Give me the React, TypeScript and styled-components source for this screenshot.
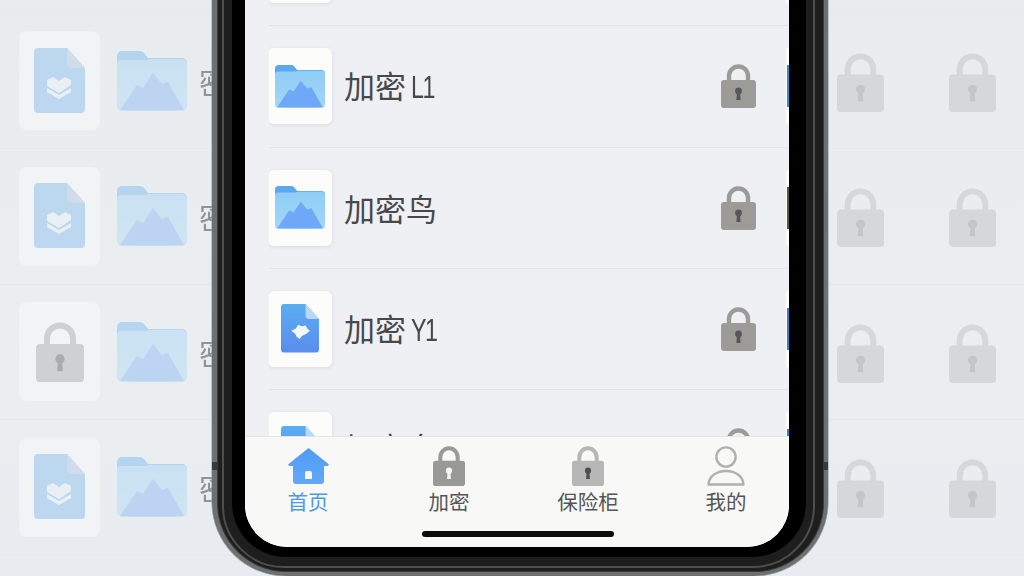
import React from "react";
import styled, { createGlobalStyle } from "styled-components";

const Global = createGlobalStyle`
  html, body { margin: 0; padding: 0; background: #e9edf0; }
  body { font-family: "Noto Sans CJK SC", "Noto Sans", sans-serif; }
`;

const Page = styled.div`
  position: relative;
  width: 1024px;
  height: 576px;
  overflow: hidden;
  background: linear-gradient(180deg, #e8ecef 0%, #ebeef1 55%, #e8ecf0 100%);
`;

/* blurred wallpaper of the same app behind the phone */
const Wall = styled.div`
  position: absolute;
  left: 0;
  right: 0;
  top: -122px;
  display: grid;
  grid-auto-rows: 135.5px;
  filter: blur(0.7px);
`;
const WallRow = styled.div`
  display: flex;
  align-items: center;
  padding: 0 28px 0 19px;
  border-bottom: 1px solid #e6e9ec;
`;
const WallTile = styled.div`
  width: 81px;
  height: 99px;
  margin-right: 17px;
  border-radius: 8px;
  background: rgba(255, 255, 255, 0.36);
  display: flex;
  align-items: center;
  justify-content: center;
  flex-shrink: 0;
`;
const WallName = styled.span`
  margin-left: 12px;
  font-size: 30px;
  line-height: 34px;
  color: #8f9397;
`;
const WallLocks = styled.div`
  margin-left: auto;
  padding-top: 3px;
  display: flex;
  gap: 65px;
`;

const Shell = styled.div`
  position: relative;
  box-sizing: border-box;
  width: 616px;
  height: 671px;
  margin: -95px 0 0 212px;
  border: solid #6e6f71;
  border-width: 0 5px 5px 6px;
  border-radius: 0 0 74px 74px;
  box-shadow: inset 0 0 0 1px #4a4a4c, 0 0 0 0.5px #9a9b9d;
`;
const Frame = styled.div`
  position: relative;
  box-sizing: border-box;
  height: 100%;
  padding: 0 17px 14px 14px;
  border-radius: 0 0 68px 68px;
  box-shadow: 0 0 0 1px #3b3b3c;
  background: #1e1e1f;
  &::before {
    content: "";
    position: absolute;
    left: 4px;
    right: 8px;
    top: -2px;
    bottom: 3px;
    border: 2px solid #4e4e50;
    border-radius: 0 0 62px 62px;
  }
`;
const Bezel = styled.div`
  position: relative;
  box-sizing: border-box;
  height: 100%;
  padding: 0 17px 10px 13px;
  border-radius: 0 0 54px 54px;
  background: #000;
`;
const Screen = styled.div`
  height: 100%;
  display: flex;
  flex-direction: column;
  overflow: hidden;
  border-radius: 0 0 42px 42px;
  background: #eef0f3;
`;
const SideMark = styled.i<{ $side: "left" | "right" }>`
  position: absolute;
  top: 557px;
  ${(p) => (p.$side === "left" ? "left: -6px; width: 6px;" : "right: -5px; width: 5px;")}
  height: 8px;
  background: #39393a;
`;

const List = styled.div`
  flex: 1;
  min-height: 0;
  overflow: hidden;
`;
const Row = styled.div`
  box-sizing: border-box;
  height: 121.3px;
  margin-left: 24px;
  display: flex;
  align-items: center;
  border-bottom: 1px solid #e2e5e8;
  overflow: hidden;
`;
const Tile = styled.div`
  width: 64px;
  height: 76px;
  border-radius: 6px;
  margin-left: -1px;
  flex-shrink: 0;
  background: #fcfcfb;
  box-shadow: 0 1px 4px rgba(120, 130, 140, 0.18);
  display: flex;
  align-items: center;
  justify-content: center;
`;
const Name = styled.div<{ $lift?: boolean }>`
  flex: 1;
  margin-left: 12px;
  margin-top: ${(p) => (p.$lift ? "-6px" : "0")};
  font-size: 31px;
  line-height: 38px;
  color: #48484a;
  white-space: nowrap;
`;
const Suffix = styled.span`
  display: inline-block;
  margin-left: 5px;
  font-family: "Liberation Sans", sans-serif;
  font-size: 31px;
  letter-spacing: -2px;
  transform: scaleX(0.75);
  transform-origin: left center;
`;
const Peek = styled.div`
  width: 3px;
  height: 76px;
  margin-left: 30px;
  flex-shrink: 0;
  background: #fbfbf9;
  display: flex;
  align-items: center;
  justify-content: flex-end;
`;
const PeekColor = styled.div<{ $c: string }>`
  width: 2px;
  height: 42px;
  background: ${(p) => p.$c};
`;

const TabBar = styled.div`
  flex-shrink: 0;
  box-sizing: border-box;
  height: 111px;
  padding: 9px 0 0 23px;
  position: relative;
  display: grid;
  grid-template-columns: 141px 139px 138px 80px;
  align-items: start;
  background: #f8f8f6;
  border-top: 1px solid #e6e6e4;
`;
const Tab = styled.div`
  width: 80px;
  display: flex;
  flex-direction: column;
  align-items: center;
`;
const TabIcon = styled.div`
  height: 40px;
  display: flex;
  align-items: center;
  justify-content: center;
`;
const TabLabel = styled.span<{ $active?: boolean }>`
  margin-top: 2px;
  font-size: 20.5px;
  line-height: 26px;
  white-space: nowrap;
  color: ${(p) => (p.$active ? "#4f9ae2" : "#555557")};
`;
const HomeBar = styled.div`
  position: absolute;
  left: 177px;
  bottom: 10px;
  width: 192px;
  height: 6px;
  border-radius: 3px;
  background: #0c0c0c;
`;

const Fade = styled.span<{ $o: number }>`
  display: flex;
  opacity: ${(p) => p.$o};
`;

const FolderIcon = ({ w, id }: { w: number; id: string }) => (
  <svg width={w} height={(w * 60) / 70} viewBox="0 0 70 60">
    <defs>
      <linearGradient id={id} x1="0" y1="0" x2="0" y2="1">
        <stop offset="0" stopColor="#8fcdf6" />
        <stop offset="1" stopColor="#a2d6f6" />
      </linearGradient>
    </defs>
    <path d="M0 5a5 5 0 0 1 5-5h18a5 5 0 0 1 4 2l4 5h34a5 5 0 0 1 5 5v20H0z" fill="#5aa8ee" />
    <path d="M0 12a4 4 0 0 1 4-3h25l3-1h33a5 5 0 0 1 5 5v42a5 5 0 0 1-5 5H5a5 5 0 0 1-5-5z" fill={`url(#${id})`} />
    <path d="M3 59 L20 34 L26 37 L36 22 L45 33 L51 31 L67 59 Q35 60 3 59z" fill="#6ea8f6" />
  </svg>
);

const DocIcon = ({
  w,
  id,
  mark,
  flat,
}: {
  w: number;
  id: string;
  mark: "heart" | "chevron";
  flat?: boolean;
}) => (
  <svg width={w} height={(w * 66) / 51} viewBox="0 0 51 66">
    <defs>
      <linearGradient id={id} x1="0" y1="0" x2="0" y2="1">
        <stop offset="0" stopColor={flat ? "#bcd8ef" : "#5aadf2"} />
        <stop offset="1" stopColor={flat ? "#bcd7ef" : "#5b8ced"} />
      </linearGradient>
    </defs>
    <path d="M4 0H33L51 20V61a4 4 0 0 1-4 4H4a4 4 0 0 1-4-4V4a4 4 0 0 1 4-4z" fill={`url(#${id})`} />
    <path d="M33 0L51 20H38a5 5 0 0 1-5-5z" fill={flat ? "#d0dcea" : "#b9d8f6"} />
    {mark === "heart" ? (
      <path d="M14 36l6-3 3-5 5 2 5-1 3 5 3 2-5 4-6 3-3 4-4-3-2-4z" fill="#fff" opacity="0.92" />
    ) : (
      <g fill="#e8f0f4">
        <path d="M13 32l6-3 6 4 6-4 6 3v5L25 45l-12-7z" />
        <path d="M13 40l12 7 12-7v4L25 51l-12-7z" />
      </g>
    )}
  </svg>
);

const LockIcon = ({
  w,
  body,
  hole,
}: {
  w: number;
  body: string;
  hole: string;
}) => (
  <svg width={w} height={(w * 44) / 35} viewBox="0 0 35 44">
    <path d="M8 19V12a9.500 9.500 0 0 1 19 0v7" fill="none" stroke={body} strokeWidth="4.4" />
    <rect x="0" y="16" width="35" height="28" rx="3" fill={body} />
    <circle cx="17.500" cy="27" r="3.400" fill={hole} />
    <path d="M16 28h3l.6 8h-4.200z" fill={hole} />
  </svg>
);

const HomeIcon = () => (
  <svg width="41" height="37" viewBox="0 0 41 37">
    <defs>
      <linearGradient id="homeFill" x1="0" y1="0" x2="0" y2="1">
        <stop offset="0" stopColor="#4f9cf5" />
        <stop offset="1" stopColor="#62a8f8" />
      </linearGradient>
    </defs>
    <path d="M20.500 0L41 16.500 39.800 18H36V33a3 3 0 0 1-3 3H8a3 3 0 0 1-3-3V18H1.200L0 16.500z" fill="url(#homeFill)" />
    <path d="M17 25a2 2 0 0 1 2-2h3a2 2 0 0 1 2 2v6h-7z" fill="#f5f7fb" />
  </svg>
);

const PersonIcon = () => (
  <svg width="38" height="40" viewBox="0 0 38 40">
    <circle cx="19" cy="11" r="9.600" fill="none" stroke="#b0b0b0" strokeWidth="2.400" />
    <path d="M1.500 38.500C2 30 10 25 19 25s17 5 17.500 13.500z" fill="none" stroke="#b0b0b0" strokeWidth="2.400" strokeLinejoin="round" />
  </svg>
);

const wallRows: ("doc" | "lock")[] = ["doc", "doc", "doc", "lock", "doc"];
const rows: { name?: string; suffix?: string; icon: string; peek: string; lift?: boolean }[] = [
  { icon: "folder", peek: "#2f8fd2" },
  { name: "加密", suffix: "L1", icon: "folder", peek: "#2f8fd2" },
  { name: "加密鸟", icon: "folder", peek: "#5c5640" },
  { name: "加密", suffix: "Y1", icon: "doc", peek: "#2f80d0" },
  { name: "加密鸟", icon: "doc", peek: "#2f80d0", lift: true },
];

export default function App() {
  return (
    <Page>
      <Global />
      <Wall>
        {wallRows.map((kind, i) => (
          <WallRow key={i}>
            <WallTile>
              {kind === "doc" ? (
                <DocIcon w={51} id={`wd${i}`} mark="chevron" flat />
              ) : (
                <LockIcon w={48} body="#cfd0d1" hole="#a9abac" />
              )}
            </WallTile>
            <Fade $o={0.36}>
              <FolderIcon w={70} id={`wf${i}`} />
            </Fade>
            <WallName>密</WallName>
            <WallLocks>
              <LockIcon w={47} body="#d5d8da" hole="#c3c6c8" />
              <LockIcon w={47} body="#d5d8da" hole="#c3c6c8" />
            </WallLocks>
          </WallRow>
        ))}
      </Wall>
      <Shell>
        <SideMark $side="left" />
        <SideMark $side="right" />
        <Frame>
          <Bezel>
            <Screen>
              <List>
                {rows.map((r, i) => (
                  <Row key={i}>
                    <Tile>
                      {r.icon === "folder" ? (
                        <FolderIcon w={50} id={`f${i}`} />
                      ) : (
                        <DocIcon w={38} id={`d${i}`} mark="heart" />
                      )}
                    </Tile>
                    <Name $lift={r.lift}>
                      {r.name}
                      {r.suffix && <Suffix>{r.suffix}</Suffix>}
                    </Name>
                    <LockIcon w={35} body="#9c9b98" hole="#55565a" />
                    <Peek>
                      <PeekColor $c={r.peek} />
                    </Peek>
                  </Row>
                ))}
              </List>
              <TabBar>
                <Tab>
                  <TabIcon>
                    <HomeIcon />
                  </TabIcon>
                  <TabLabel $active>首页</TabLabel>
                </Tab>
                <Tab>
                  <TabIcon>
                    <LockIcon w={32} body="#999998" hole="#f6f6f4" />
                  </TabIcon>
                  <TabLabel>加密</TabLabel>
                </Tab>
                <Tab>
                  <TabIcon>
                    <LockIcon w={32} body="#b7b7b7" hole="#4f4f50" />
                  </TabIcon>
                  <TabLabel>保险柜</TabLabel>
                </Tab>
                <Tab>
                  <TabIcon>
                    <PersonIcon />
                  </TabIcon>
                  <TabLabel>我的</TabLabel>
                </Tab>
                <HomeBar />
              </TabBar>
            </Screen>
          </Bezel>
        </Frame>
      </Shell>
    </Page>
  );
}
